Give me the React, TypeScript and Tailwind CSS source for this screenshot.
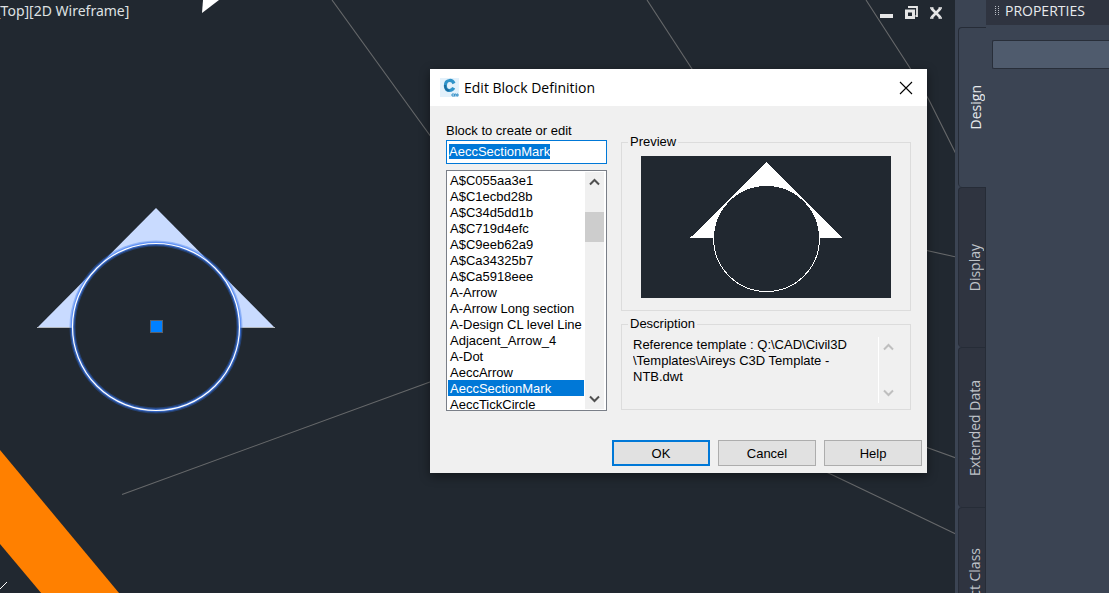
import { useEffect, useRef, useState } from 'react';

const blocks = [
  'A$C055aa3e1',
  'A$C1ecbd28b',
  'A$C34d5dd1b',
  'A$C719d4efc',
  'A$C9eeb62a9',
  'A$Ca34325b7',
  'A$Ca5918eee',
  'A-Arrow',
  'A-Arrow Long section',
  'A-Design CL level Line',
  'Adjacent_Arrow_4',
  'A-Dot',
  'AeccArrow',
  'AeccSectionMark',
  'AeccTickCircle',
];

const tabs = ['Design', 'Display', 'Extended Data', 'Object Class'];

const description = 'Reference template : Q:\\CAD\\Civil3D\n\\Templates\\Aireys C3D Template -\nNTB.dwt';

function Drawing() {
  return (
    <svg className="absolute inset-0 w-full h-full" aria-hidden="true">
      <g stroke="#66686a" strokeWidth="1.100" fill="none">
        <path d="M332 0L434 141" />
        <path d="M647 0L694 72" />
        <path d="M866 0L910 68L929 100L956 154" />
        <path d="M920 249L956 257" />
        <path d="M920 445L956 458" />
        <path d="M820 469L956 534" />
        <path d="M122 494.500L434 380.500" />
      </g>
      <path d="M203 0L202 13L219 0Z" fill="#fff" />
      <path d="M0 450L119 593V600H47L0 544Z" fill="#ff8000" />
      <path d="M0 589L7 582" stroke="#fff" />
      <path d="M156 208L275 328H37Z" fill="#c9dbff" />
      <path d="M37 327.500H275" stroke="#b5b9bf" />
      <circle cx="156" cy="327" r="83.500" fill="#212830" />
      <g fill="none">
        <circle cx="156" cy="327" r="83.500" stroke="#2f6fe8" strokeOpacity="0.35" strokeWidth="6" />
        <circle cx="156" cy="327" r="83.500" stroke="#3f7cf5" strokeOpacity="0.6" strokeWidth="3.500" />
        <circle cx="156" cy="327" r="83.500" stroke="#fff" strokeWidth="1.200" />
      </g>
      <rect x="150.500" y="320.500" width="12" height="12" fill="#0080ff" stroke="#5b6068" />
    </svg>
  );
}

function BlockPreview() {
  return (
    <svg className="block w-full h-[142px] bg-[#212830]" viewBox="0 0 250 142" shapeRendering="crispEdges" aria-hidden="true">
      <path d="M125.500 6L201.500 82H49Z" fill="#fff" />
      <circle cx="125.500" cy="82.500" r="53" fill="#212830" stroke="#fff" />
    </svg>
  );
}

function Chevron({ down = false }: { down?: boolean }) {
  return (
    <svg width="11" height="8" viewBox="0 0 11 8" fill="none" stroke="currentColor" strokeWidth="2" aria-hidden="true">
      <path d={down ? 'M1 1.500L5.500 6L10 1.500' : 'M1 6.500L5.500 2L10 6.500'} />
    </svg>
  );
}

function AppLogo() {
  return (
    <svg width="19" height="19" viewBox="0 0 19 19" aria-hidden="true">
      <rect width="19" height="19" fill="#e3f1fb" />
      <path d="M14 5.500C13 3.200 11.500 2.300 9.500 2.500C6.700 2.800 5.300 5.100 5.400 8C5.500 10.900 7 12.600 9.500 12.500C11.500 12.400 12.900 11.500 13.700 9.800" fill="none" stroke="#2f93c9" strokeWidth="3.200" />
      <path d="M5 7C5.200 10.500 6.800 12.600 9.400 12.600" fill="none" stroke="#1a6c9e" strokeWidth="2" />
      <path d="M14 16H12V18H14M14.500 18.500V16H16V18.500M16.800 16H18V18H16.800Z" fill="none" stroke="#3b93c8" strokeWidth="1" />
    </svg>
  );
}

function ViewportBar() {
  return (
    <div className="relative flex items-start justify-between pr-3">
      <span className="-ml-1 pt-px font-['Noto_Sans',sans-serif] text-sm leading-5 text-[#dfe1e3]">[Top][2D Wireframe]</span>
      <div className="flex gap-[11px] pt-1.5 text-[#e6e6e6]">
        <button type="button" aria-label="Minimize">
          <svg width="14" height="14" viewBox="0 0 14 14">
            <rect x="1" y="8" width="13" height="4" fill="currentColor" />
          </svg>
        </button>
        <button type="button" aria-label="Restore">
          <svg width="14" height="14" viewBox="0 0 14 14" fill="none" stroke="currentColor">
            <path d="M4 1H13V10H11.500" strokeWidth="1.800" />
            <rect x="2.500" y="5" width="7" height="6.500" strokeWidth="3" />
          </svg>
        </button>
        <button type="button" aria-label="Close viewport">
          <svg width="14" height="14" viewBox="0 0 14 14" fill="none" stroke="currentColor" strokeWidth="2.600">
            <path d="M2.500 2.500L11.500 11.500M11.500 2.500L2.500 11.500" />
            <path d="M1 2H4.500M9.500 2H13M1 12H4.500M9.500 12H13" strokeWidth="1.500" />
          </svg>
        </button>
      </div>
    </div>
  );
}

function EditBlockDialog() {
  const [name, setName] = useState('AeccSectionMark');
  const inputRef = useRef<HTMLInputElement>(null);

  useEffect(() => {
    inputRef.current?.focus();
    inputRef.current?.select();
  }, []);

  return (
    <div
      role="dialog"
      aria-labelledby="dialog-title"
      className="absolute left-[430px] top-[69px] w-[497px] bg-[#f0f0f0] font-['Liberation_Sans',Arial,sans-serif] text-[13px] leading-[18px] text-black shadow-[0_3px_10px_rgba(0,0,0,0.45)]"
    >
      <div className="flex h-[37px] items-center bg-white pl-2.5 pr-3.5">
        <AppLogo />
        <h1 id="dialog-title" className="ml-[5px] flex-1 font-['Open_Sans',sans-serif] text-sm">
          Edit Block Definition
        </h1>
        <button type="button" aria-label="Close">
          <svg width="14" height="14" viewBox="0 0 14 14" stroke="#000" strokeWidth="1.100">
            <path d="M1 1L13 13M13 1L1 13" />
          </svg>
        </button>
      </div>

      <div className="flex gap-3.5 px-4 pt-4">
        <div className="flex w-[161px] flex-col">
          <label htmlFor="block-name">Block to create or edit</label>
          <input
            id="block-name"
            ref={inputRef}
            value={name}
            onChange={(e) => setName(e.target.value)}
            className="h-6 w-full border border-[#0078d7] bg-white px-0.5 pb-0.5 outline-none selection:bg-[#0078d7] selection:text-white"
          />
          <div className="mt-1.5 flex h-[241px] border border-[#7a7f88] bg-white p-px">
            <select
              size={15}
              aria-label="Blocks"
              value={name}
              onChange={(e) => setName(e.target.value)}
              className="h-full min-w-0 flex-1 overflow-hidden outline-none [scrollbar-width:none]"
            >
              {blocks.map((block) => (
                <option
                  key={block}
                  value={block}
                  className="h-4 min-h-0 px-0.5 pb-0 pt-px leading-4 checked:bg-linear-to-r checked:from-[#0078d7] checked:to-[#0078d7] checked:[-webkit-text-fill-color:white]"
                >
                  {block}
                </option>
              ))}
            </select>
            <div className="ml-px mr-px flex w-[19px] flex-col bg-[#f0f0f0] text-[#505050]">
              <button type="button" aria-label="Scroll up" className="flex h-5 items-center justify-center">
                <Chevron />
              </button>
              <div className="flex-1 pt-5">
                <div className="h-[30px] bg-[#cdcdcd]" />
              </div>
              <button type="button" aria-label="Scroll down" className="flex h-5 items-center justify-center">
                <Chevron down />
              </button>
            </div>
          </div>
        </div>

        <div className="mt-[11px] flex min-w-0 flex-1 flex-col gap-1">
          <fieldset className="border border-[#dcdcdc] px-[19px] pb-3 pt-[5px]">
            <legend className="-ml-[13px] px-0.5">Preview</legend>
            <BlockPreview />
          </fieldset>
          <fieldset className="min-w-0 border border-[#dcdcdc] pb-1.5 pl-[11px] pr-3 pt-1">
            <legend className="-ml-[5px] px-0.5">Description</legend>
            <div className="flex h-[66px]">
              <textarea
                readOnly
                aria-label="Description"
                value={description}
                className="min-w-0 flex-1 resize-none overflow-hidden border-r border-white leading-4 outline-none"
              />
              <div className="flex w-[19px] flex-col items-center justify-between pb-1.5 pt-1.5 text-[#bfbfbf]">
                <Chevron />
                <Chevron down />
              </div>
            </div>
          </fieldset>
        </div>
      </div>

      <div className="mt-[29px] flex justify-end gap-2 pb-[7px] pr-[5px]">
        <button type="button" className="h-[26px] w-[98px] border-2 border-[#0078d7] bg-[#e1e1e1] pt-0.5">OK</button>
        <button type="button" className="h-[26px] w-[98px] border border-[#adadad] bg-[#e1e1e1] pt-0.5">Cancel</button>
        <button type="button" className="h-[26px] w-[98px] border border-[#adadad] bg-[#e1e1e1] pt-0.5">Help</button>
      </div>
    </div>
  );
}

function PropertiesPalette() {
  const [active, setActive] = useState('Design');

  return (
    <aside className="flex w-[154px] shrink-0 bg-[#3b4453] font-['Open_Sans',sans-serif]">
      <div className="flex w-[31px] flex-col pl-[3px] pt-[27px]">
        {tabs.map((tab) => (
          <button
            key={tab}
            type="button"
            onClick={() => setActive(tab)}
            className={
              tab === active
                ? 'flex h-40 shrink-0 items-center justify-center rounded-l border-l border-t border-[#262c37] text-[#e8eaed]'
                : 'flex h-40 shrink-0 items-center justify-center rounded-l border-l border-r border-t border-[#262c37] bg-[#2f3440] text-[#bfc3c9]'
            }
          >
            <span className="rotate-180 whitespace-nowrap pr-1.5 text-sm leading-5 [writing-mode:vertical-rl]">{tab}</span>
          </button>
        ))}
      </div>
      <div className="min-w-0 flex-1">
        <div className="flex h-[25px] items-center gap-1.5 bg-[#2f3440] pb-1 pl-2">
          <svg width="5" height="10" viewBox="0 0 5 10" aria-hidden="true">
            <path d="M1.500 0V10M4.500 0V10" stroke="#b9bdc4" strokeDasharray="1 1" />
          </svg>
          <h2 className="text-sm leading-5 text-[#e8eaed]">PROPERTIES</h2>
        </div>
        <div className="pl-1.5 pt-[15px]">
          <input
            aria-label="Selection"
            className="block h-[29px] w-full rounded-l-xs border border-r-0 border-[#282e39] bg-[#4f5b6d] px-2 text-sm text-white outline-none"
          />
        </div>
      </div>
    </aside>
  );
}

export default function App() {
  return (
    <div className="flex h-screen overflow-hidden bg-[#212830]">
      <main className="relative min-w-0 flex-1 overflow-hidden">
        <Drawing />
        <ViewportBar />
        <EditBlockDialog />
      </main>
      <PropertiesPalette />
    </div>
  );
}
